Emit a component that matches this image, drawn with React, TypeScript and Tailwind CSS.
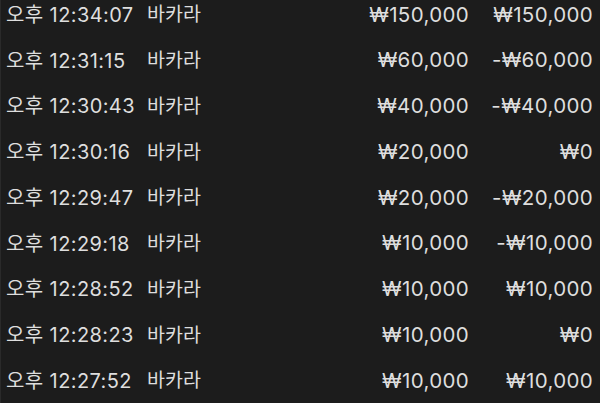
const rows = [
  { time: '오후 12:34:07', game: '바카라', bet: '₩150,000', result: '₩150,000' },
  { time: '오후 12:31:15', game: '바카라', bet: '₩60,000', result: '-₩60,000' },
  { time: '오후 12:30:43', game: '바카라', bet: '₩40,000', result: '-₩40,000' },
  { time: '오후 12:30:16', game: '바카라', bet: '₩20,000', result: '₩0' },
  { time: '오후 12:29:47', game: '바카라', bet: '₩20,000', result: '-₩20,000' },
  { time: '오후 12:29:18', game: '바카라', bet: '₩10,000', result: '-₩10,000' },
  { time: '오후 12:28:52', game: '바카라', bet: '₩10,000', result: '₩10,000' },
  { time: '오후 12:28:23', game: '바카라', bet: '₩10,000', result: '₩0' },
  { time: '오후 12:27:52', game: '바카라', bet: '₩10,000', result: '₩10,000' },
];

export default function App() {
  return (
    <div className="w-[600px] h-[403px] overflow-hidden bg-[#1c1c1c] border-l border-[#2a2a2a] text-[#dedede] text-[20px] font-['Inter','Noto_Sans_CJK_KR',sans-serif]">
      <div className="-mt-[8px]">
        {rows.map((r, i) => (
          <div key={i} className="flex items-center h-[45.75px] pl-[5px] pr-[7px]">
            <span className="w-[141px] text-[20px] tracking-[0.4px]">{r.time}</span>
            <span className="flex-1 text-[19.5px]">{r.game}</span>
            <span className="w-[130px] text-right text-[20.5px] tracking-[0.35px]">{r.bet}</span>
            <span className="w-[124px] text-right text-[20.5px] tracking-[0.35px]">{r.result}</span>
          </div>
        ))}
      </div>
    </div>
  );
}
